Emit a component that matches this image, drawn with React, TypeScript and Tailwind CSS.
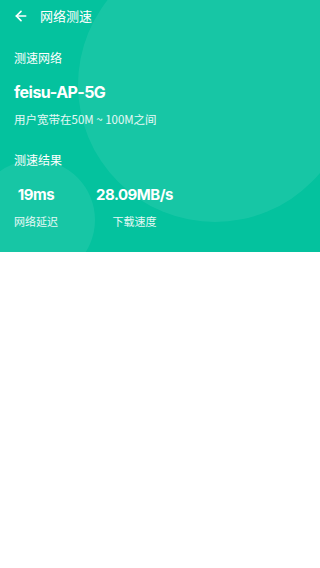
import { ArrowLeft } from 'lucide-react';

const font = { fontFamily: '"Noto Sans CJK SC", "Noto Sans", sans-serif' };

export default function App() {
  return (
    <div className="min-h-[568px] w-full bg-white" style={font}>
      <div className="relative h-[252px] overflow-hidden bg-[#04c29e] text-white">
        <div className="absolute left-[78px] top-[-52px] h-[274px] w-[274px] rounded-full bg-white/[0.08]" />
        <div className="absolute left-[-25px] top-[160px] h-[120px] w-[120px] rounded-full bg-white/[0.08]" />

        <div className="relative">
          <div className="flex h-[32px] items-center pl-[13px]">
            <ArrowLeft className="h-[16px] w-[16px]" strokeWidth={2.5} />
            <span className="ml-[11px] text-[13px]">网络测速</span>
          </div>

          <div className="px-[14px]">
            <div className="mt-[18px] text-[12px] leading-[16px]">测速网络</div>
            <div className="mt-[15px] font-[Inter] text-[16px] font-bold leading-[22px] tracking-[-0.5px]">feisu-AP-5G</div>
            <div className="mt-[8px] text-[11.5px] leading-[16px] text-white/90">用户宽带在50M ~ 100M之间</div>
            <div className="mt-[25px] text-[12px] leading-[16px]">测速结果</div>

            <div className="mt-[17px] flex gap-[38px]">
              <div className="flex flex-col items-center">
                <span className="font-[Inter] text-[15px] font-bold leading-[20px] tracking-[-0.5px]">19ms</span>
                <span className="mt-[8px] text-[11px] leading-[16px] text-white/90">网络延迟</span>
              </div>
              <div className="flex flex-col items-center">
                <span className="font-[Inter] text-[15px] font-bold leading-[20px] tracking-[-0.5px]">28.09MB/s</span>
                <span className="mt-[8px] text-[11px] leading-[16px] text-white/90">下载速度</span>
              </div>
            </div>
          </div>
        </div>
      </div>
    </div>
  );
}
